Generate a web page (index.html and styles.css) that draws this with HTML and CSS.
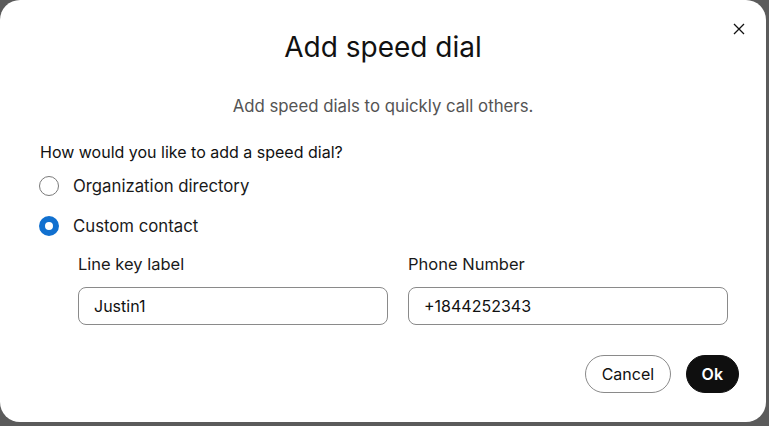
FILE: index.html
```html
<!DOCTYPE html>
<html lang="en">
<head>
    <meta charset="UTF-8" />
    <title>Add speed dial</title>
    <link rel="stylesheet" href="styles.css">
</head>
<body>
    <div class="dialog">
        <button class="close" aria-label="Close">
            <svg width="12" height="12" viewBox="0 0 12 12">
                <path d="M1 1 L11 11 M11 1 L1 11" stroke="#111" stroke-width="1.3" fill="none" />
            </svg>
        </button>
        <h1>Add speed dial</h1>
        <p class="subtitle">Add speed dials to quickly call others.</p>

        <p class="question">How would you like to add a speed dial?</p>
        <div class="options">
            <label class="option">
                <span class="radio"></span>
                Organization directory
            </label>
            <label class="option">
                <span class="radio checked"></span>
                Custom contact
            </label>
        </div>

        <div class="fields">
            <div class="field">
                <span class="field-label">Line key label</span>
                <div class="input">Justin1</div>
            </div>
            <div class="field">
                <span class="field-label">Phone Number</span>
                <div class="input">+1844252343</div>
            </div>
        </div>

        <div class="actions">
            <button class="btn btn-secondary">Cancel</button>
            <button class="btn btn-primary">Ok</button>
        </div>
    </div>
</body>
</html>
```

FILE: styles.css
```css
* {
    box-sizing: border-box;
    margin: 0;
    padding: 0;
}

body {
    font-family: 'Inter', 'Noto Sans', sans-serif;
    background-color: #5b5b5b;
    color: #111;
    width: 769px;
    height: 426px;
    overflow: hidden;
}

.dialog {
    position: relative;
    width: 766px;
    height: 422px;
    background: #fff;
    border-radius: 20px;
    padding: 30px 40px 0 40px;
}

.close {
    position: absolute;
    top: 21px;
    right: 19px;
    width: 16px;
    height: 16px;
    border: none;
    background: none;
    display: flex;
    align-items: center;
    justify-content: center;
}

h1 {
    text-align: center;
    font-size: 28px;
    font-weight: 400;
    line-height: 34px;
}

.subtitle {
    text-align: center;
    font-size: 16.8px;
    color: #545454;
    margin-top: 30px;
    line-height: 24px;
}

.question {
    font-size: 16px;
    line-height: 24px;
    margin-top: 22px;
}

.options {
    display: flex;
    flex-direction: column;
    gap: 16px;
    margin-top: 10px;
}

.option {
    display: flex;
    align-items: center;
    gap: 14px;
    font-size: 16.75px;
    line-height: 24px;
    color: #1a1a1a;
}

.radio {
    width: 20px;
    height: 20px;
    margin-left: -1px;
    border-radius: 50%;
    border: 1px solid #7a7a7a;
    flex-shrink: 0;
}

.radio.checked {
    border: 6px solid #1170cf;
    background: #fff;
}

.fields {
    display: grid;
    grid-template-columns: 310px 320px;
    gap: 20px;
    margin: 14px 0 0 38px;
}

.field {
    display: flex;
    flex-direction: column;
    gap: 11px;
}

.field-label {
    font-size: 16.5px;
    line-height: 24px;
    color: #1a1a1a;
}

.input {
    height: 38px;
    border: 1px solid #8a8a8a;
    border-radius: 8px;
    padding: 0 15px;
    font-size: 16px;
    line-height: 36px;
    color: #111;
}

.actions {
    display: flex;
    justify-content: flex-end;
    gap: 15px;
    margin-top: 30px;
    margin-right: -13px;
}

.btn {
    font-family: inherit;
    font-size: 16px;
    height: 38px;
    border-radius: 19px;
    padding: 0 15.5px;
    cursor: pointer;
}

.btn-secondary {
    background: #fff;
    border: 1px solid #8a8a8a;
    color: #111;
}

.btn-primary {
    background: #0f0f0f;
    border: 1px solid #0f0f0f;
    color: #fff;
    font-weight: 600;
    padding: 0 15px;
}
```
